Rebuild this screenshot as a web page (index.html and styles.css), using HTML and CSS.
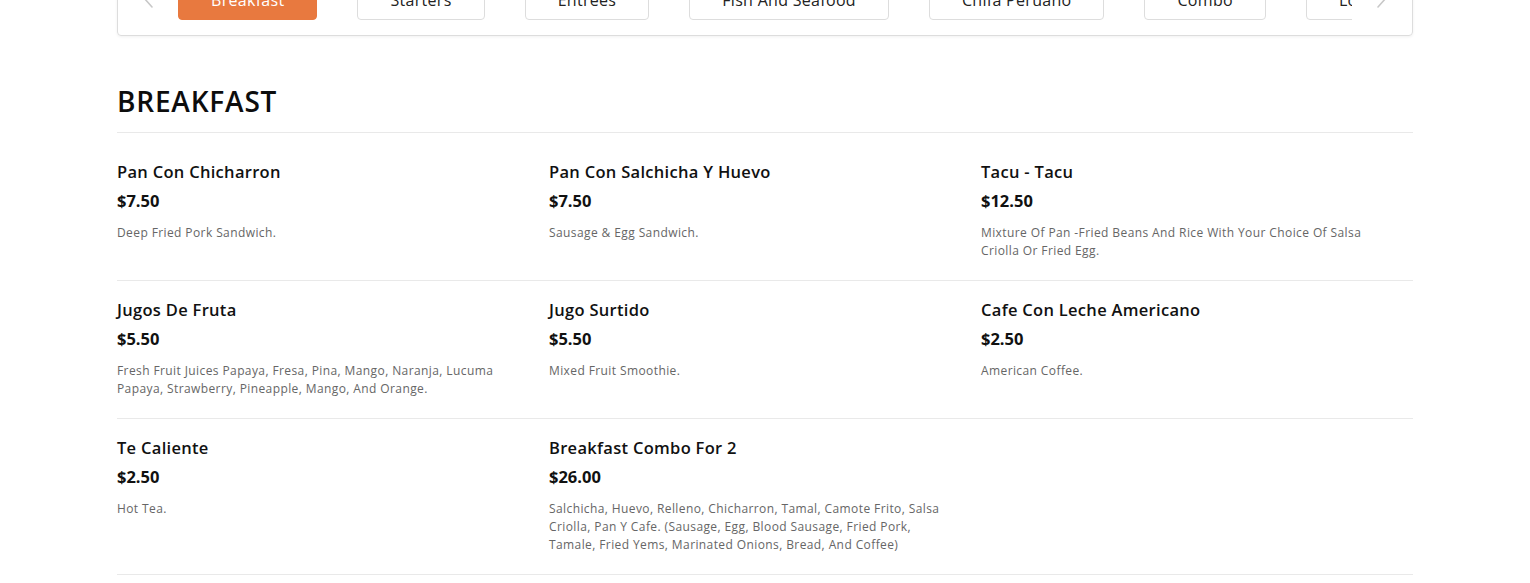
FILE: index.html
```html
<!DOCTYPE html>
<html lang="en">
<head>
<meta charset="utf-8">
<title>Menu - Breakfast</title>
<link rel="stylesheet" href="styles.css">
</head>
<body>
<div class="page">
  <nav class="tabbar">
    <button class="arrow arrow-left" aria-label="Previous">
      <svg width="14" height="22" viewBox="0 0 14 22"><path d="M11 2 L3 11 L11 20" fill="none" stroke="#c8c8c8" stroke-width="1.6" stroke-linecap="round" stroke-linejoin="round"/></svg>
    </button>
    <div class="tabs-viewport">
      <div class="tabs">
        <span class="tab active">Breakfast</span>
        <span class="tab">Starters</span>
        <span class="tab">Entrees</span>
        <span class="tab">Fish And Seafood</span>
        <span class="tab">Chifa Peruano</span>
        <span class="tab">Combo</span>
        <span class="tab">Lomo Saltado</span>
        <span class="tab">Desserts</span>
      </div>
    </div>
    <button class="arrow arrow-right" aria-label="Next">
      <svg width="14" height="22" viewBox="0 0 14 22"><path d="M3 2 L11 11 L3 20" fill="none" stroke="#c8c8c8" stroke-width="1.6" stroke-linecap="round" stroke-linejoin="round"/></svg>
    </button>
  </nav>

  <section class="category">
    <h2 class="category-title">BREAKFAST</h2>
    <div class="items">
      <div class="item">
        <h3 class="item-name">Pan Con Chicharron</h3>
        <div class="item-price">$7.50</div>
        <p class="item-desc">Deep Fried Pork Sandwich.</p>
      </div>
      <div class="item">
        <h3 class="item-name">Pan Con Salchicha Y Huevo</h3>
        <div class="item-price">$7.50</div>
        <p class="item-desc">Sausage &amp; Egg Sandwich.</p>
      </div>
      <div class="item">
        <h3 class="item-name">Tacu - Tacu</h3>
        <div class="item-price">$12.50</div>
        <p class="item-desc">Mixture Of Pan -Fried Beans And Rice With Your Choice Of Salsa Criolla Or Fried Egg.</p>
      </div>
      <div class="item">
        <h3 class="item-name">Jugos De Fruta</h3>
        <div class="item-price">$5.50</div>
        <p class="item-desc">Fresh Fruit Juices Papaya, Fresa, Pina, Mango, Naranja, Lucuma Papaya, Strawberry, Pineapple, Mango, And Orange.</p>
      </div>
      <div class="item">
        <h3 class="item-name">Jugo Surtido</h3>
        <div class="item-price">$5.50</div>
        <p class="item-desc">Mixed Fruit Smoothie.</p>
      </div>
      <div class="item">
        <h3 class="item-name">Cafe Con Leche Americano</h3>
        <div class="item-price">$2.50</div>
        <p class="item-desc">American Coffee.</p>
      </div>
      <div class="item">
        <h3 class="item-name">Te Caliente</h3>
        <div class="item-price">$2.50</div>
        <p class="item-desc">Hot Tea.</p>
      </div>
      <div class="item">
        <h3 class="item-name">Breakfast Combo For 2</h3>
        <div class="item-price">$26.00</div>
        <p class="item-desc">Salchicha, Huevo, Relleno, Chicharron, Tamal, Camote Frito, Salsa Criolla, Pan Y Cafe. (Sausage, Egg, Blood Sausage, Fried Pork, Tamale, Fried Yems, Marinated Onions, Bread, And Coffee)</p>
      </div>
      <div class="item item-empty"></div>
    </div>
  </section>
</div>
</body>
</html>
```

FILE: styles.css
```css
* { box-sizing: border-box; }

html, body {
  margin: 0;
  padding: 0;
  background: #ffffff;
}

body {
  font-family: "Open Sans", "Noto Sans", Arial, sans-serif;
  color: #111111;
  overflow: hidden;
}

.page {
  width: 1296px;
  margin: 0 auto;
}

.tabbar {
  margin-top: -41px;
  height: 77px;
  border: 1px solid #dddddd;
  border-radius: 4px;
  box-shadow: 0 1px 3px rgba(0,0,0,0.06);
  display: flex;
  align-items: center;
}

.arrow {
  flex: 0 0 60px;
  height: 40px;
  border: 0;
  background: transparent;
  padding: 0;
  display: flex;
  align-items: center;
  justify-content: center;
}

.tabs-viewport {
  flex: 1 1 auto;
  overflow: hidden;
}

.tabs {
  display: flex;
  gap: 40px;
  white-space: nowrap;
  padding-top: 4px;
}

.tab {
  flex: 0 0 auto;
  height: 40px;
  line-height: 38px;
  padding: 0 32px;
  border: 1px solid #dddddd;
  border-radius: 4px;
  font-size: 16px;
  color: #222222;
  background: #ffffff;
  letter-spacing: 0.3px;
}

.tab.active {
  background: #e8793f;
  border-color: #e8793f;
  color: #ffffff;
}

.category {
  padding-top: 48px;
}

.category-title {
  margin: 0;
  font-size: 28px;
  line-height: 34px;
  font-weight: 600;
  letter-spacing: 0.8px;
  padding-bottom: 14px;
  border-bottom: 1px solid #e9e9e9;
  color: #0d0d0d;
}

.items {
  display: grid;
  grid-template-columns: repeat(3, 1fr);
  padding-top: 10px;
}

.item {
  padding: 17px 32px 20px 0;
  border-bottom: 1px solid #e9e9e9;
}

.item-name {
  margin: 0;
  font-size: 16.5px;
  line-height: 24px;
  font-weight: 600;
  letter-spacing: 0.3px;
  color: #111111;
}

.item-price {
  margin-top: 5px;
  font-size: 16.5px;
  line-height: 24px;
  font-weight: 700;
  color: #111111;
}

.item-desc {
  margin: 11px 0 0;
  font-size: 12px;
  line-height: 18px;
  color: #666666;
  letter-spacing: 0.4px;
}
```
